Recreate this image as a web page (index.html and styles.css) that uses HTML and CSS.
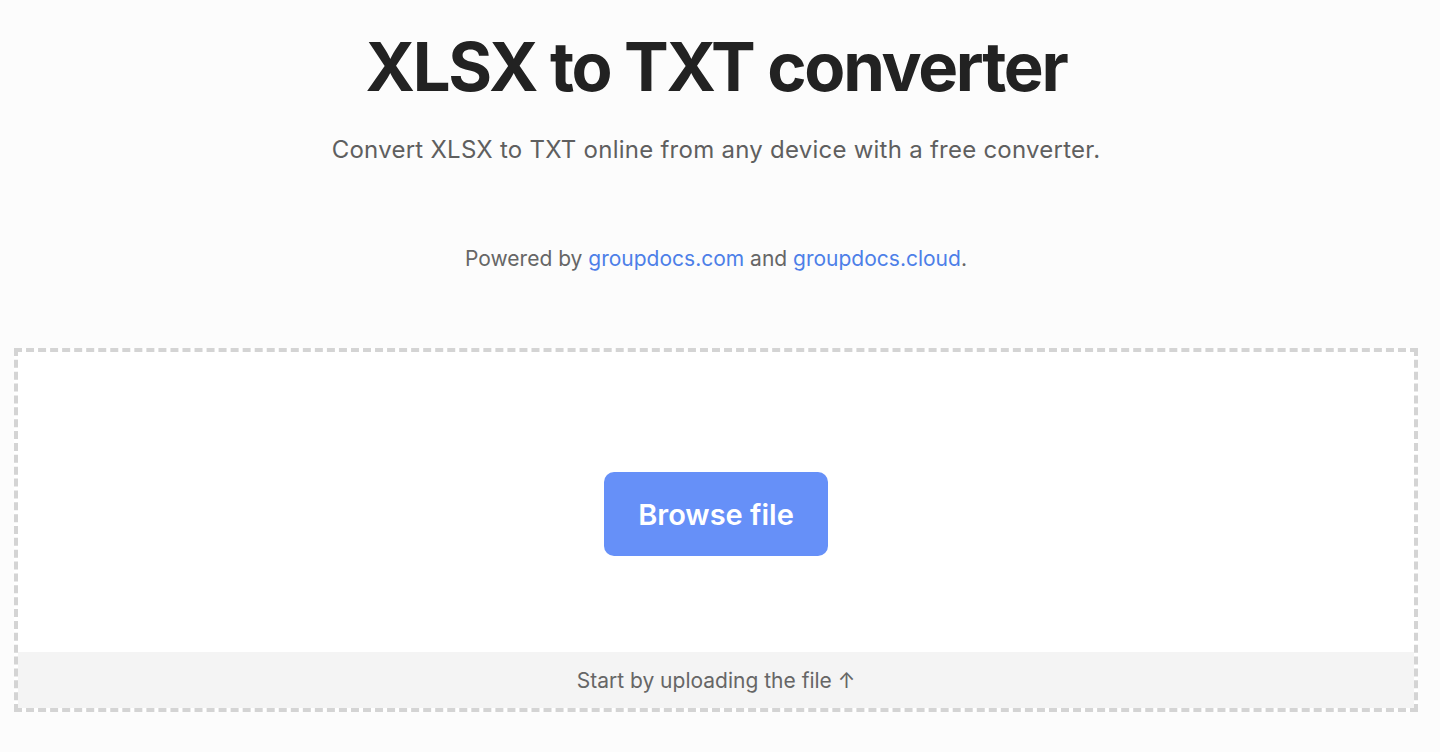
FILE: index.html
```html
<!DOCTYPE html>
<html lang="en">
<head>
<meta charset="utf-8">
<title>XLSX to TXT converter</title>
<link rel="stylesheet" href="styles.css">
</head>
<body>
<main class="page">
  <header class="hero">
    <h1 class="title">XLSX to TXT converter</h1>
    <p class="subtitle">Convert XLSX to TXT online from any device with a free converter.</p>
    <p class="powered">Powered by <a href="#">groupdocs.com</a> and <a href="#">groupdocs.cloud</a>.</p>
  </header>
  <section class="dropzone">
    <div class="drop-body">
      <button class="browse" type="button">Browse file</button>
    </div>
    <div class="drop-footer">Start by uploading the file ↑</div>
  </section>
</main>
</body>
</html>
```

FILE: styles.css
```css
* { box-sizing: border-box; }
html, body { margin: 0; padding: 0; }
body {
  background: #fcfcfc;
  font-family: Inter, "Noto Sans", sans-serif;
  color: #222;
}
.page {
  padding: 0 22px 0 14px;
}
.hero {
  display: flex;
  flex-direction: column;
  align-items: center;
  padding-top: 22px;
}
.title {
  margin: 0;
  font-size: 67px;
  font-weight: 700;
  line-height: 90px;
  letter-spacing: -2.25px;
  color: #222;
}
.subtitle {
  margin: 21px 0 0;
  font-size: 24px;
  line-height: 34px;
  letter-spacing: 0.25px;
  color: #5f5f5f;
}
.powered {
  margin: 78px 0 0;
  font-size: 21px;
  line-height: 28px;
  color: #666;
}
.powered a {
  color: #4d7fe8;
  text-decoration: none;
}
.dropzone {
  margin-top: 75px;
  height: 364px;
  border: 4px dashed #d4d4d4;
  background: #fff;
  display: flex;
  flex-direction: column;
}
.drop-body {
  flex: 1;
  display: flex;
  align-items: center;
  justify-content: center;
  padding-top: 24px;
}
.browse {
  width: 224px;
  height: 84px;
  border: 0;
  border-radius: 10px;
  background: #6690f8;
  color: #fff;
  font-family: Inter, "Noto Sans", sans-serif;
  font-size: 29px;
  font-weight: 600;
  cursor: pointer;
}
.drop-footer {
  height: 56px;
  background: #f4f4f4;
  display: flex;
  align-items: center;
  justify-content: center;
  font-size: 21px;
  color: #666;
}
```
